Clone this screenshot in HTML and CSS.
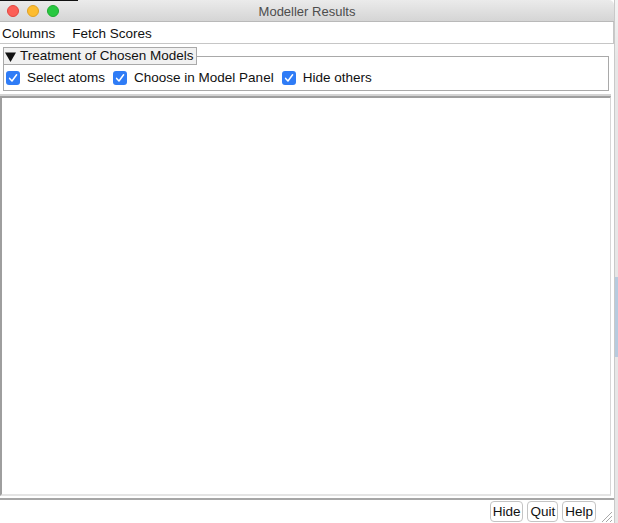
FILE: index.html
```html
<!DOCTYPE html>
<html>
<head>
<meta charset="utf-8">
<title>Modeller Results</title>
<link rel="stylesheet" href="styles.css">
</head>
<body>
<div class="window">
  <div class="titlebar">
    <div class="lights">
      <span class="light red"></span>
      <span class="light yellow"></span>
      <span class="light green"></span>
    </div>
    <div class="title">Modeller Results</div>
    <div></div>
  </div>
  <div class="menubar">
    <span class="menu">Columns</span>
    <span class="menu">Fetch Scores</span>
  </div>
  <div class="content">
    <div class="group">
      <div class="group-head">
        <div class="legend"><svg class="tri" viewBox="0 0 11 10" width="11" height="10"><path d="M0 0.5 H11 L5.5 10 Z" fill="#111"/></svg>Treatment of Chosen Models</div>
        <div class="rule"></div>
      </div>
      <div class="group-body">
        <label class="check"><span class="box"><svg viewBox="0 0 14 14" width="14" height="14"><path d="M3.6 7.4 L6 10 L10.6 3.8" fill="none" stroke="#fff" stroke-width="1.5" stroke-linecap="round" stroke-linejoin="round"/></svg></span>Select atoms</label>
        <label class="check"><span class="box"><svg viewBox="0 0 14 14" width="14" height="14"><path d="M3.6 7.4 L6 10 L10.6 3.8" fill="none" stroke="#fff" stroke-width="1.5" stroke-linecap="round" stroke-linejoin="round"/></svg></span>Choose in Model Panel</label>
        <label class="check"><span class="box"><svg viewBox="0 0 14 14" width="14" height="14"><path d="M3.6 7.4 L6 10 L10.6 3.8" fill="none" stroke="#fff" stroke-width="1.5" stroke-linecap="round" stroke-linejoin="round"/></svg></span>Hide others</label>
      </div>
    </div>
    <div class="sash"></div>
    <div class="panel"></div>
    <div class="divider"></div>
  </div>
  <div class="bottombar">
    <button class="btn">Hide</button>
    <button class="btn">Quit</button>
    <button class="btn">Help</button>
    <div class="grip">
      <svg viewBox="0 0 15 15" width="15" height="15"><path d="M14 4 L4 14 M14 8 L8 14 M14 12 L12 14" stroke="#a8a8a8" stroke-width="1" fill="none"/></svg>
    </div>
  </div>
</div>
<div class="backdrop"></div>
</body>
</html>
```

FILE: styles.css
```css
html, body {
  margin: 0;
  padding: 0;
}
body {
  width: 618px;
  height: 523px;
  overflow: hidden;
  display: flex;
  background: #eeeeee;
  font-family: "Liberation Sans", Arial, sans-serif;
  font-size: 13.5px;
  color: #1a1a1a;
}
.window {
  width: 614px;
  height: 523px;
  display: flex;
  flex-direction: column;
  background: #ffffff;
  position: relative;
}
.window::before {
  content: "";
  position: absolute;
  left: 0;
  top: 0;
  width: 78px;
  height: 1px;
  background: #111;
  z-index: 2;
}
.titlebar {
  height: 22px;
  flex: none;
  box-sizing: border-box;
  background: linear-gradient(#ebebeb, #d5d5d5);
  border-bottom: 1px solid #b9b9b9;
  border-top-right-radius: 5px;
  display: grid;
  grid-template-columns: 1fr auto 1fr;
  align-items: center;
}
.lights {
  display: flex;
  gap: 8px;
  padding-left: 7px;
  padding-top: 1px;
}
.light {
  width: 12px;
  height: 12px;
  border-radius: 50%;
  box-sizing: border-box;
}
.red { background: #fc5f57; border: 0.5px solid #e2463f; }
.yellow { background: #fdbc2e; border: 0.5px solid #e0a123; }
.green { background: #28c840; border: 0.5px solid #1eaa30; }
.title {
  text-align: center;
  color: #4d4d4d;
  font-size: 13px;
  padding-top: 1px;
}
.menubar {
  height: 22px;
  flex: none;
  box-sizing: border-box;
  border-bottom: 1px solid #c6c6c6;
  border-right: 1px solid #c6c6c6;
  display: flex;
  align-items: center;
  gap: 17px;
  padding-left: 2px;
  padding-top: 1px;
  color: #111;
}
.content {
  flex: 1;
  display: flex;
  flex-direction: column;
  padding-right: 3px;
}
.group {
  margin: 3px 2px 0 3px;
}
.group-head {
  display: flex;
  height: 18px;
}
.legend {
  box-sizing: border-box;
  height: 18px;
  border: 1px solid #a9a9a9;
  background: #f1f1f1;
  padding: 0 2px 0 1px;
  line-height: 16px;
  color: #111;
  display: flex;
  align-items: center;
  gap: 4px;
}
.tri {
  flex: none;
  margin-top: 1px;
}
.rule {
  flex: 1;
  align-self: flex-end;
  height: 9px;
  box-sizing: border-box;
  border-top: 1px solid #a9a9a9;
  border-right: 1px solid #a9a9a9;
}
.group-body {
  box-sizing: border-box;
  height: 26px;
  border: 1px solid #a9a9a9;
  border-top: none;
  display: flex;
  align-items: center;
  padding-left: 2px;
  gap: 8px;
}
.check {
  display: flex;
  align-items: center;
  gap: 7px;
  color: #111;
}
.box {
  width: 14px;
  height: 14px;
  border-radius: 3px;
  background: #2f7cf6;
  display: flex;
}
.sash {
  margin-top: 3px;
  height: 2px;
  background: #d3d3d3;
  flex: none;
}
.panel {
  flex: 1;
  box-sizing: border-box;
  border-top: 2px solid #9e9e9e;
  border-left: 2px solid #9e9e9e;
  border-right: 1px solid #d6d6d6;
  border-bottom: 2px solid #e4e4e4;
  background: #fff;
}
.divider {
  margin-top: 2px;
  height: 2px;
  background: #a6a6a6;
  margin-right: -3px;
  flex: none;
}
.bottombar {
  height: 23px;
  flex: none;
  display: flex;
  justify-content: flex-end;
  align-items: flex-start;
  padding-top: 1px;
  padding-right: 1px;
  box-sizing: border-box;
  gap: 4px;
}
.btn {
  font-family: inherit;
  font-size: 13.5px;
  color: #111;
  height: 21px;
  box-sizing: border-box;
  padding: 0 2px;
  border: 1px solid #c4c4c4;
  border-radius: 4px;
  background: #fff;
  margin: 0;
  line-height: 18px;
}
.grip {
  width: 15px;
  height: 15px;
  margin-top: 7px;
  margin-left: -2px;
  display: flex;
}
.backdrop {
  flex: 1;
  background: linear-gradient(#f4f4f4 0, #e6e6e6 60px, #e6e6e6 277px, #b7cbde 277px, #b7cbde 357px, #e6e6e6 357px, #e6e6e6 100%);
  border-left: 1px solid #c9c9c9;
}
```
